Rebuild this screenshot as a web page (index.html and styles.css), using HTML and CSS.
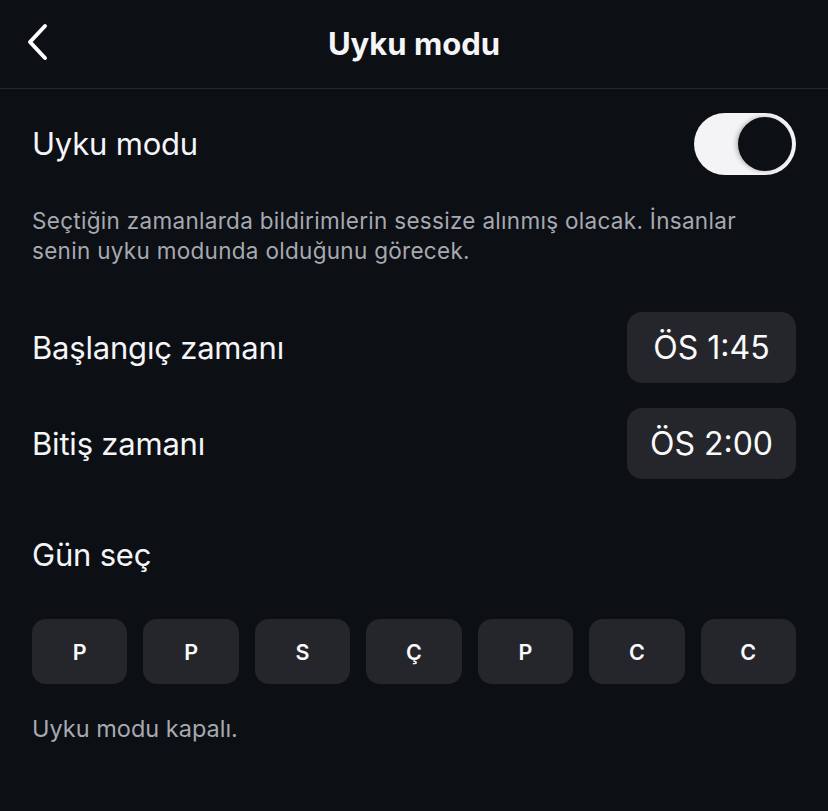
FILE: index.html
```html
<!DOCTYPE html>
<html lang="tr">
<head>
<meta charset="utf-8">
<title>Uyku modu</title>
<link rel="stylesheet" href="styles.css">
</head>
<body>
<div class="screen">
  <header class="header">
    <button class="back" aria-label="Geri">
      <svg width="30" height="40" viewBox="0 0 30 40"><polyline points="19,3 4,19 19,35" fill="none" stroke="#fff" stroke-width="4" stroke-linecap="round" stroke-linejoin="round"/></svg>
    </button>
    <h1 class="title">Uyku modu</h1>
    <span class="spacer"></span>
  </header>
  <main class="content">
    <div class="row toggle-row">
      <span class="label">Uyku modu</span>
      <span class="toggle"><span class="knob"></span></span>
    </div>
    <p class="desc">Seçtiğin zamanlarda bildirimlerin sessize alınmış olacak. İnsanlar senin uyku modunda olduğunu görecek.</p>
    <div class="row time-row first">
      <span class="label">Başlangıç zamanı</span>
      <span class="time">ÖS 1:45</span>
    </div>
    <div class="row time-row second">
      <span class="label">Bitiş zamanı</span>
      <span class="time">ÖS 2:00</span>
    </div>
    <div class="label days-title">Gün seç</div>
    <div class="days">
      <span class="day">P</span>
      <span class="day">P</span>
      <span class="day">S</span>
      <span class="day">Ç</span>
      <span class="day">P</span>
      <span class="day">C</span>
      <span class="day">C</span>
    </div>
    <p class="status">Uyku modu kapalı.</p>
  </main>
</div>
</body>
</html>
```

FILE: styles.css
```css
* { box-sizing: border-box; }
html, body {
  margin: 0;
  padding: 0;
  background: #0c0f14;
  color: #f5f5f7;
  font-family: Inter, "Noto Sans", "DejaVu Sans", sans-serif;
}
.screen {
  width: 828px;
  min-height: 811px;
}
.header {
  height: 89px;
  border-bottom: 1px solid #24272d;
  display: grid;
  grid-template-columns: 80px 1fr 80px;
  align-items: center;
}
.back {
  background: none;
  border: 0;
  padding: 0 0 0 26px;
  margin: 0;
  height: 40px;
  display: flex;
  align-items: center;
  align-self: center;
  margin-top: -3px;
}
.title {
  margin: 0;
  text-align: center;
  font-size: 31px;
  font-weight: 700;
  letter-spacing: 0;
  margin-top: -2px;
}
.content {
  padding: 0 32px 0 32px;
}
.row {
  display: flex;
  align-items: center;
  justify-content: space-between;
}
.label {
  font-size: 31px;
  font-weight: 400;
  letter-spacing: -0.2px;
  line-height: 36px;
}
.toggle-row {
  padding-top: 24px;
}
.toggle {
  width: 102px;
  height: 62px;
  border-radius: 31px;
  background: #f4f4f6;
  display: flex;
  align-items: center;
  justify-content: flex-end;
  padding-right: 4px;
}
.knob {
  width: 54px;
  height: 54px;
  border-radius: 50%;
  background: #0c0f14;
  box-shadow: -2px 0 4px rgba(0,0,0,0.25);
}
.desc {
  margin: 31px 0 0;
  font-size: 22.5px;
  line-height: 30px;
  color: #a6a9b0;
  letter-spacing: 0.3px;
  padding-right: 20px;
}
.time-row.first { margin-top: 46px; }
.time-row.second { margin-top: 25px; }
.time {
  width: 169px;
  height: 71px;
  border-radius: 15px;
  background: #24262b;
  display: flex;
  align-items: center;
  justify-content: center;
  font-size: 32px;
  letter-spacing: 0;
  color: #fafafa;
}
.days-title {
  margin-top: 58px;
}
.days {
  margin-top: 46px;
  display: flex;
  gap: 16px;
}
.day {
  flex: 1;
  height: 65px;
  border-radius: 14px;
  background: #24262b;
  display: flex;
  align-items: center;
  justify-content: center;
  font-size: 21.5px;
  font-weight: 600;
  color: #fafafa;
}
.status {
  margin: 30px 0 0;
  font-size: 23.5px;
  line-height: 30px;
  color: #a6a9b0;
}
```
